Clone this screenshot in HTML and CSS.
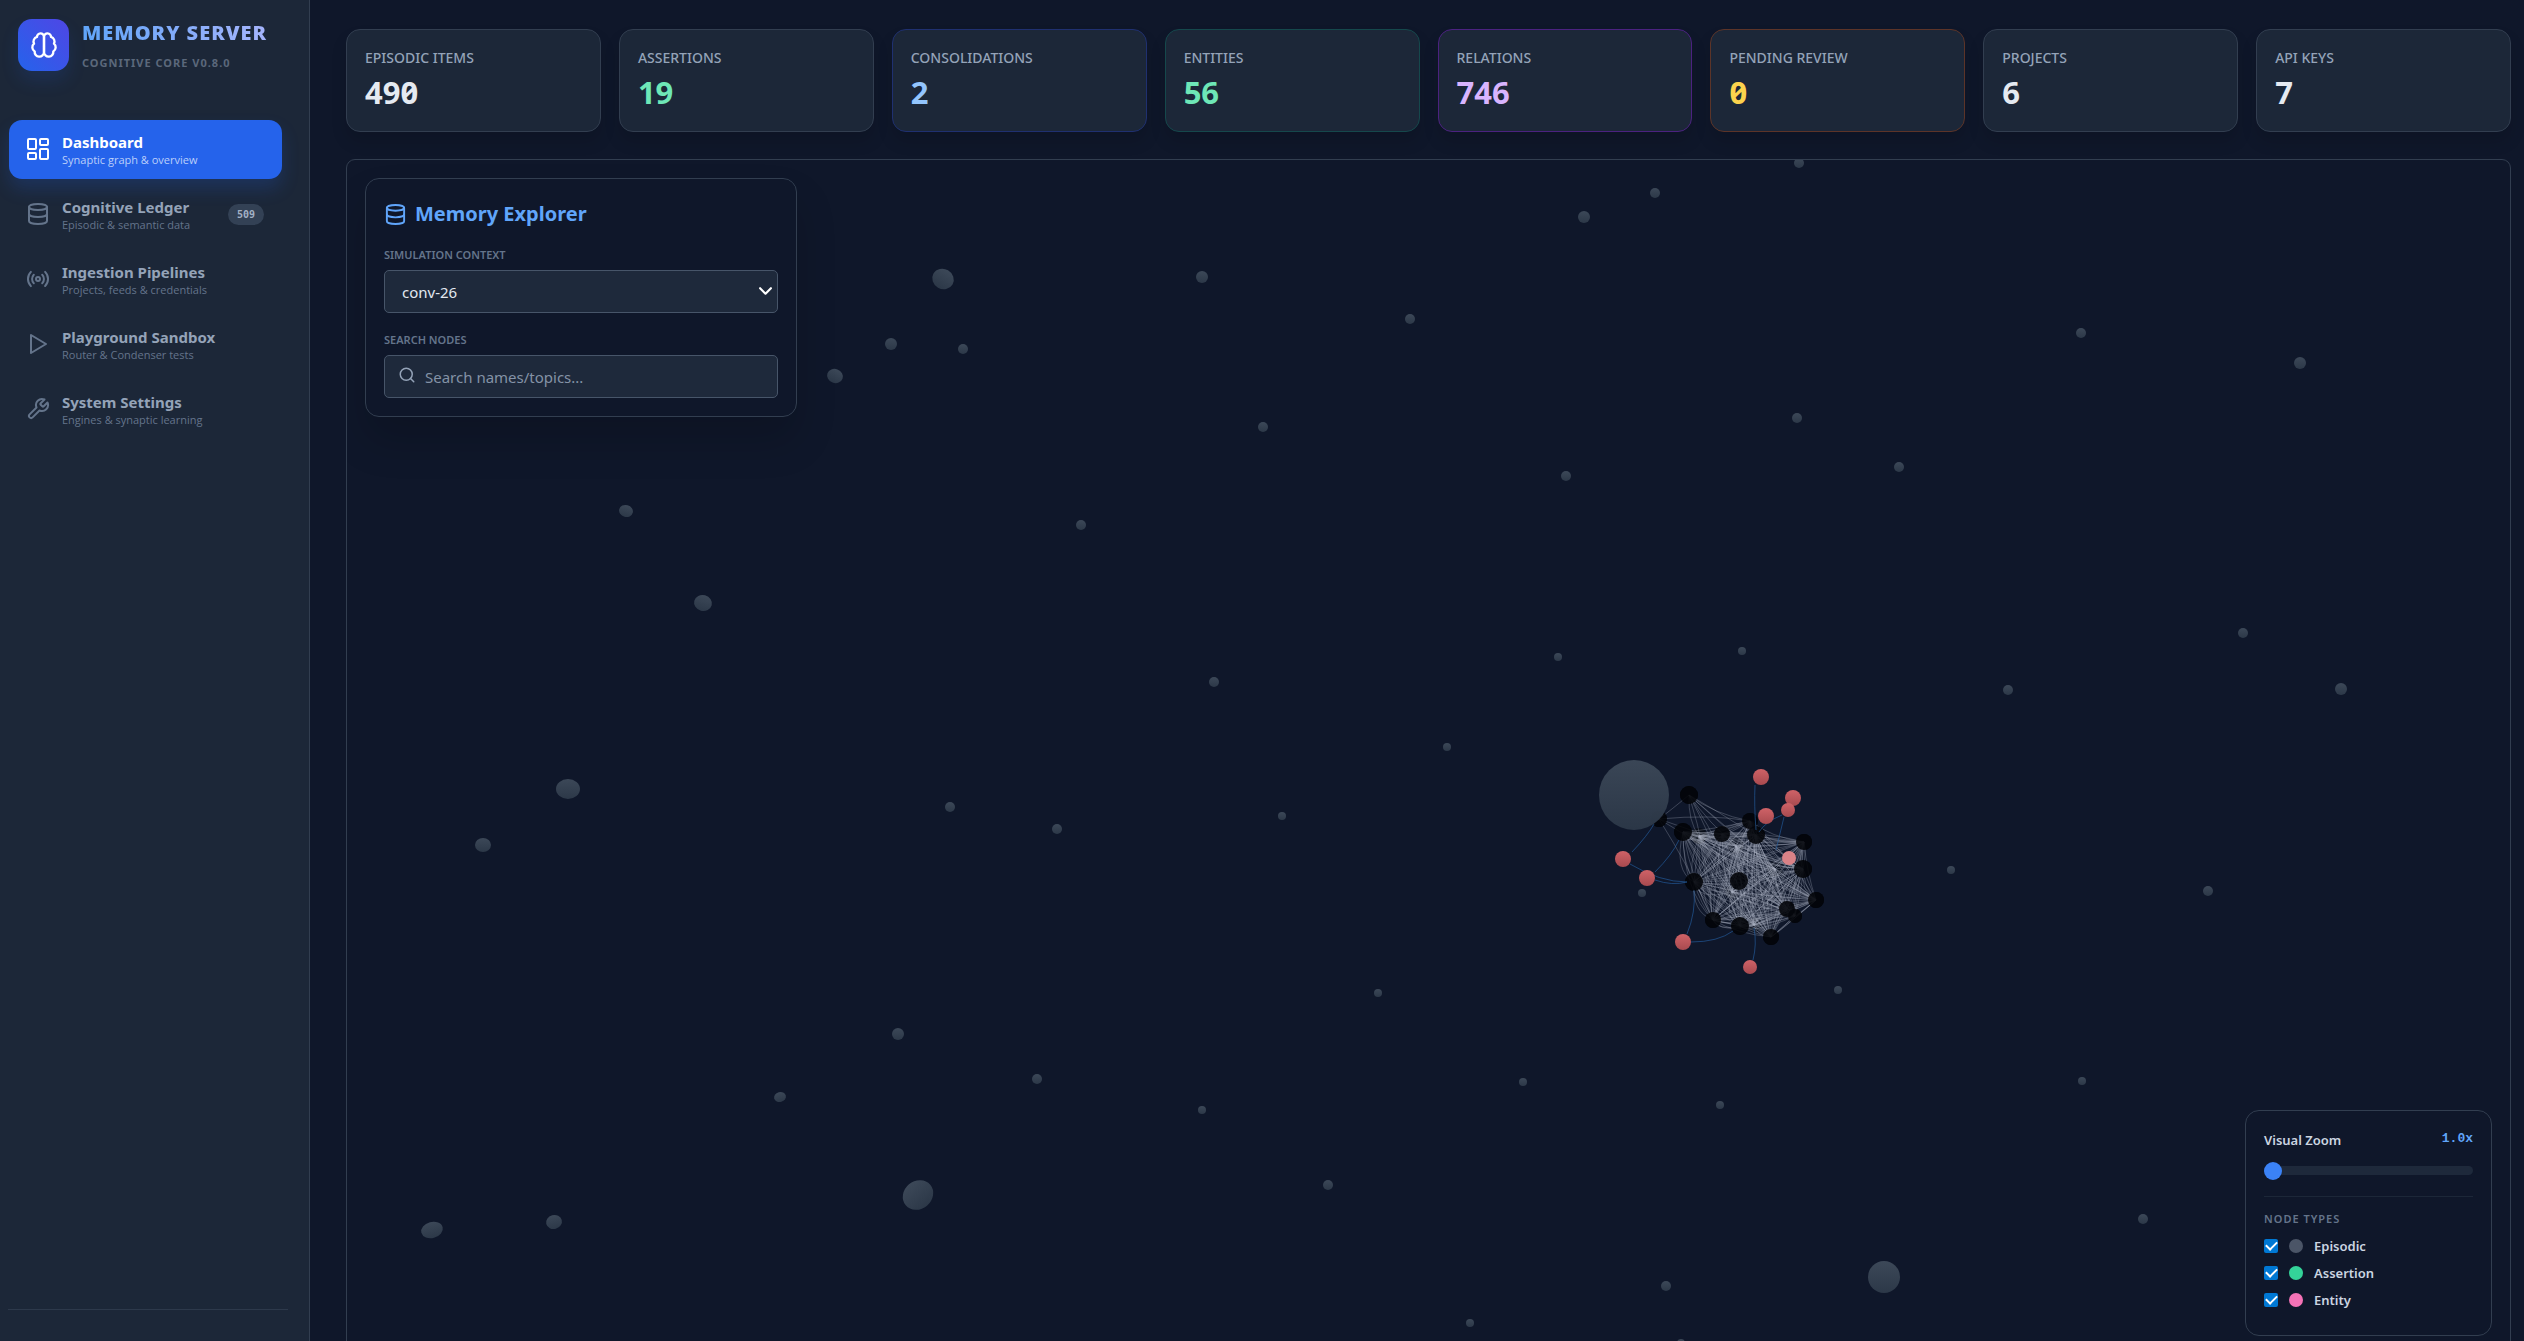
FILE: index.html
```
<!DOCTYPE html>
<html lang="en">
<head>
<meta charset="utf-8">
<title>Memory Server</title>
<link rel="stylesheet" href="styles.css">
</head>
<body>
<svg class="sprite" aria-hidden="true">
  <symbol id="i-brain" viewBox="0 0 24 24"><path d="M12 5a3 3 0 1 0-5.997.125 4 4 0 0 0-2.526 5.77 4 4 0 0 0 .556 6.588A4 4 0 1 0 12 18Z"/><path d="M12 5a3 3 0 1 1 5.997.125 4 4 0 0 1 2.526 5.77 4 4 0 0 1-.556 6.588A4 4 0 1 1 12 18Z"/></symbol>
  <symbol id="i-dash" viewBox="0 0 24 24"><rect x="2" y="2" width="8" height="10" rx="1"/><rect x="14" y="2" width="8" height="6" rx="1"/><rect x="14" y="12" width="8" height="10" rx="1"/><rect x="2" y="16" width="8" height="6" rx="1"/></symbol>
  <symbol id="i-db" viewBox="0 0 24 24"><ellipse cx="12" cy="5" rx="9" ry="3"/><path d="M3 5v14a9 3 0 0 0 18 0V5"/><path d="M3 12a9 3 0 0 0 18 0"/></symbol>
  <symbol id="i-radio" viewBox="0 0 24 24"><path d="M4.900 19.100C1 15.200 1 8.800 4.900 4.900M7.800 16.200c-2.300-2.300-2.300-6.100 0-8.500M16.200 7.800c2.300 2.300 2.300 6.100 0 8.500M19.100 4.900C23 8.800 23 15.100 19.100 19"/><circle cx="12" cy="12" r="2"/></symbol>
  <symbol id="i-play" viewBox="0 0 24 24"><path d="M5 3l15 9-15 9z"/></symbol>
  <symbol id="i-wrench" viewBox="0 0 24 24"><path d="M14.700 6.300a1 1 0 0 0 0 1.400l1.600 1.600a1 1 0 0 0 1.400 0l3.770-3.770a6 6 0 0 1-7.940 7.940l-6.910 6.910a2.120 2.120 0 0 1-3-3l6.910-6.910a6 6 0 0 1 7.940-7.940l-3.760 3.760z"/></symbol>
  <symbol id="i-search" viewBox="0 0 24 24"><circle cx="11" cy="11" r="8"/><path d="m21 21-4.300-4.300"/></symbol>
</svg>
<div class="app">
  <aside class="sidebar">
    <header class="brand">
      <span class="logo"><svg class="icon"><use href="#i-brain"/></svg></span>
      <div>
        <h1 class="brand-name">MEMORY SERVER</h1>
        <p class="brand-sub">COGNITIVE CORE V0.8.0</p>
      </div>
    </header>
    <nav class="nav">
      <button class="nav-item active"><svg class="icon"><use href="#i-dash"/></svg><span class="nav-text"><span class="nav-title">Dashboard</span><span class="nav-sub">Synaptic graph &amp; overview</span></span></button>
      <button class="nav-item"><svg class="icon"><use href="#i-db"/></svg><span class="nav-text"><span class="nav-title">Cognitive Ledger</span><span class="nav-sub">Episodic &amp; semantic data</span></span><span class="count">509</span></button>
      <button class="nav-item"><svg class="icon"><use href="#i-radio"/></svg><span class="nav-text"><span class="nav-title">Ingestion Pipelines</span><span class="nav-sub">Projects, feeds &amp; credentials</span></span></button>
      <button class="nav-item"><svg class="icon"><use href="#i-play"/></svg><span class="nav-text"><span class="nav-title">Playground Sandbox</span><span class="nav-sub">Router &amp; Condenser tests</span></span></button>
      <button class="nav-item"><svg class="icon"><use href="#i-wrench"/></svg><span class="nav-text"><span class="nav-title">System Settings</span><span class="nav-sub">Engines &amp; synaptic learning</span></span></button>
    </nav>
    <div class="sidebar-foot"></div>
  </aside>
  <main class="main">
    <section class="stats">
      <div class="stat"><span class="stat-label">EPISODIC ITEMS</span><span class="stat-value">490</span></div>
      <div class="stat"><span class="stat-label">ASSERTIONS</span><span class="stat-value green">19</span></div>
      <div class="stat edge-blue"><span class="stat-label">CONSOLIDATIONS</span><span class="stat-value blue">2</span></div>
      <div class="stat edge-green"><span class="stat-label">ENTITIES</span><span class="stat-value green">56</span></div>
      <div class="stat edge-purple"><span class="stat-label">RELATIONS</span><span class="stat-value purple">746</span></div>
      <div class="stat edge-orange"><span class="stat-label">PENDING REVIEW</span><span class="stat-value yellow">0</span></div>
      <div class="stat"><span class="stat-label">PROJECTS</span><span class="stat-value">6</span></div>
      <div class="stat"><span class="stat-label">API KEYS</span><span class="stat-value">7</span></div>
    </section>
    <section class="graph">
      <svg class="graph-canvas" id="graph" viewBox="347 160 2163 1194" preserveAspectRatio="xMidYMid slice">
        <defs>
          <linearGradient id="g-slate" x1="0" y1="0" x2="0" y2="1"><stop offset="0" stop-color="#3c4858"/><stop offset="1" stop-color="#2c3848"/></linearGradient>
          <linearGradient id="g-red" x1="0" y1="0" x2="0" y2="1"><stop offset="0" stop-color="#cf6267"/><stop offset="1" stop-color="#a84a4f"/></linearGradient>
        </defs>
      </svg>
      <div class="explorer">
        <h2 class="explorer-title"><svg class="icon"><use href="#i-db"/></svg>Memory Explorer</h2>
        <label class="field-label" for="context">SIMULATION CONTEXT</label>
        <div class="field">
          <select class="control" id="context"><option>conv-26</option></select>
          <svg class="chevron" viewBox="0 0 12 8"><path d="M1 1l5 5 5-5"/></svg>
        </div>
        <label class="field-label" for="search">SEARCH NODES</label>
        <div class="field">
          <svg class="search-icon"><use href="#i-search"/></svg>
          <input class="control search" id="search" type="text" placeholder="Search names/topics...">
        </div>
      </div>
      <div class="legend">
        <div class="zoom-head"><label for="zoom">Visual Zoom</label><output class="zoom-value" for="zoom">1.0x</output></div>
        <input class="zoom-range" id="zoom" type="range" min="1" max="5" step="0.1" value="1">
        <div class="legend-types">
          <h3 class="legend-title">NODE TYPES</h3>
          <label class="type"><input type="checkbox" checked><span class="dot dot-episodic"></span>Episodic</label>
          <label class="type"><input type="checkbox" checked><span class="dot dot-assertion"></span>Assertion</label>
          <label class="type"><input type="checkbox" checked><span class="dot dot-entity"></span>Entity</label>
        </div>
      </div>
    </section>
  </main>
</div>
<script src="script.js"></script>
</body>
</html>
```

FILE: script.js
```
const svg = document.getElementById('graph');
const add = (tag, attrs) => {
  const el = document.createElementNS('http://www.w3.org/2000/svg', tag);
  for (const k in attrs) el.setAttribute(k, attrs[k]);
  svg.appendChild(el);
};

// Episodic nodes: x, y, radius, optional vertical radius, optional tilt
const episodic = [
  [1799,163,5],[1655,193,5],[1584,217,6],[943,279,11,10,30],[1202,277,6],[891,344,6],[963,349,5],[835,376,8,7,20],
  [1410,319,5],[2081,333,5],[2300,363,6],[1263,427,5],[1797,418,5],[1566,476,5],[1899,467,5],[626,511,7,6,15],
  [1081,525,5],[703,603,9,8,15],[1558,657,4],[1742,651,4],[2243,633,5],[1214,682,5],[2008,690,5],[2341,689,6],
  [1447,747,4],[568,789,12,10],[483,845,8,7],[950,807,5],[1057,829,5],[1282,816,4],[1951,870,4],[2208,891,5],
  [1642,893,4],[1838,990,4],[1378,993,4],[898,1034,6],[1037,1079,5],[780,1097,6,5,-15],[1202,1110,4],[1523,1082,4],
  [1720,1105,4],[2082,1081,4],[918,1195,16,14,-40],[1328,1185,5],[2143,1219,5],[432,1230,11,8,-15],[554,1222,8,7,-15],
  [1884,1277,16],[1666,1286,5],[1470,1323,4],[1681,1343,4]
];

// Core nodes: x, y, radius, opacity
const core = [
  [1736,846,8,0.25],[1775,869,8,0.25],[1732,892,7,0.25],[1754,925,7,0.3],[1699,836,8,0.6],
  [1659,819,8,1],[1689,795,9,1],[1683,832,9,1],[1722,834,8,0.9],[1750,821,8,0.9],[1756,835,9,1],
  [1804,842,8,1],[1803,869,9,1],[1694,882,9,1],[1739,881,9,1],[1816,900,8,1],[1795,916,7,0.9],
  [1787,909,8,1],[1713,920,8,1],[1740,926,9,1],[1771,937,8,1]
];

const entities = [
  [1761,777,8],[1793,798,8],[1788,810,7],[1766,816,8],[1623,859,8],[1647,878,8],[1789,858,7],[1683,942,8],[1750,967,7]
];

const relations = [
  'M1755 785Q1754 805 1756 830','M1632 852Q1648 835 1654 824','M1655 872Q1672 855 1679 840',
  'M1655 880Q1672 886 1687 882','M1630 864Q1660 882 1687 882','M1687 934Q1696 912 1694 890',
  'M1691 942Q1718 942 1733 931','M1753 960Q1757 944 1754 928','M1782 815Q1765 822 1759 832','M1784 817L1776 850'
];

episodic.forEach(([x, y, r, v, t]) => add('ellipse', {
  cx: x, cy: y, rx: r, ry: v || r, fill: 'url(#g-slate)', transform: `rotate(${t || 0} ${x} ${y})`
}));

core.forEach(([x, y, r, o]) => add('circle', { cx: x, cy: y, r, fill: '#03060b', opacity: o }));

core.forEach((a, i) => {
  core.forEach((b, j) => {
    if (j <= i || a === core[14] || b === core[14]) return;
    const outer = [a, b].some(n => n[1] < 822 && n[0] < 1700);
    if (outer && (i * 3 + j) % 3) return;
    const bend = ((i + j) % 5 - 2) * 3;
    const mx = (a[0] + b[0]) / 2 + bend;
    const my = (a[1] + b[1]) / 2 - bend;
    add('path', { d: `M${a[0]} ${a[1]}Q${mx} ${my} ${b[0]} ${b[1]}`, class: 'mesh' });
    if (!outer) add('path', { d: `M${a[0]} ${a[1]}Q${mx - 9} ${my + 8} ${b[0]} ${b[1]}`, class: 'mesh' });
  });
});

core.filter(n => n[3] > 0.8).forEach(([x, y, r]) => add('circle', { cx: x, cy: y, r, fill: '#03060b', opacity: 0.9 }));
relations.forEach(d => add('path', { d, class: 'relation' }));
entities.forEach(([x, y, r]) => add('circle', { cx: x, cy: y, r, fill: x === 1789 ? '#d98287' : 'url(#g-red)' }));
add('circle', { cx: 1634, cy: 795, r: 35, fill: 'url(#g-slate)', opacity: 0.96 });
```

FILE: styles.css
```
* { box-sizing: border-box; }
body {
  margin: 0;
  height: 100vh;
  overflow: hidden;
  background: #0f172a;
  color: #e5eaf1;
  font-family: "Noto Sans", "Open Sans", sans-serif;
  font-size: 16px;
}
h1, h2, h3, p { margin: 0; }
button, input, select { font: inherit; }
.sprite { display: none; }
.icon, .search-icon, .chevron {
  fill: none;
  stroke: currentColor;
  stroke-width: 2;
  stroke-linecap: round;
  stroke-linejoin: round;
  flex: none;
}
.icon { width: 24px; height: 24px; }
.app { display: flex; height: 100%; }

.sidebar {
  flex: none;
  width: 310px;
  padding: 19px 21px 0 9px;
  display: flex;
  flex-direction: column;
  background: #1c2738;
  border-right: 1px solid #323e50;
}
.brand { display: flex; gap: 13px; padding-left: 9px; }
.logo {
  width: 51px;
  height: 52px;
  border-radius: 14px;
  display: grid;
  place-items: center;
  color: #fff;
  background: linear-gradient(to top right, #2563eb, #4f46e5);
  box-shadow: 0 10px 18px rgba(37, 99, 235, 0.14);
}
.logo .icon { width: 28px; height: 28px; }
.brand-name {
  font-size: 20px;
  line-height: 28px;
  font-weight: 900;
  letter-spacing: 1px;
  background: linear-gradient(to right, #60a5fa, #a5b4fc);
  -webkit-background-clip: text;
  background-clip: text;
  color: transparent;
}
.brand-sub {
  margin-top: 7px;
  font-size: 11px;
  line-height: 18px;
  font-weight: 700;
  letter-spacing: 1px;
  color: #5b687b;
}
.nav { margin-top: 48px; display: flex; flex-direction: column; gap: 6px; }
.nav-item {
  height: 59px;
  margin-right: 6px;
  padding: 0 18px 1px 17px;
  display: flex;
  align-items: center;
  gap: 12px;
  border: 0;
  border-radius: 13px;
  background: none;
  color: #64748b;
  text-align: left;
}
.nav-text { display: flex; flex-direction: column; flex: 1; white-space: nowrap; }
.nav-title { font-size: 15px; line-height: 20px; font-weight: 700; color: #94a3b8; }
.nav-sub { font-family: "Open Sans", "Noto Sans", sans-serif; font-size: 11px; line-height: 15px; color: #64748b; }
.nav-item.active {
  background: #2563eb;
  color: #fff;
  box-shadow: 0 10px 18px rgba(37, 99, 235, 0.2);
}
.active .nav-title { color: #fff; }
.active .nav-sub { color: #bccffa; }
.count {
  padding: 0 9px;
  border-radius: 11px;
  background: #334155;
  color: #a3b1c6;
  font: 700 10px/21px "DejaVu Sans Mono", monospace;
}
.sidebar-foot { margin: auto 0 31px -1px; border-top: 1px solid #2d394b; }

.main {
  flex: 1;
  min-width: 0;
  height: calc(100vh + 14px);
  padding: 29px 13px 0 36px;
  display: flex;
  flex-direction: column;
  gap: 27px;
}
.stats { display: grid; grid-template-columns: repeat(8, 1fr); gap: 18px; }
.stat {
  height: 103px;
  padding: 16px 18px;
  display: flex;
  flex-direction: column;
  gap: 2px;
  background: #1c2738;
  border: 1px solid #323e50;
  border-radius: 14px;
  box-shadow: 0 10px 16px rgba(0, 0, 0, 0.12);
}
.stat-label { font-size: 14px; line-height: 24px; font-weight: 500; color: #94a3b8; }
.stat-value { font-size: 31px; line-height: 40px; font-weight: 700; font-variant-numeric: slashed-zero; }
.green { color: #6ee7b7; }
.blue { color: #93c5fd; }
.purple { color: #d8b4fe; }
.yellow { color: #fcd34d; }
.edge-blue { border-color: #1f3070; }
.edge-green { border-color: #15484c; }
.edge-purple { border-color: #4b2280; }
.edge-orange { border-color: #5c3428; }

.graph {
  position: relative;
  flex: 1;
  min-height: 0;
  border: 1px solid #323e50;
  border-radius: 9px;
  overflow: hidden;
}
.graph-canvas { position: absolute; inset: 0; width: 100%; height: 100%; }
.mesh { fill: none; stroke: #a9b0c0; stroke-width: 1; opacity: 0.3; }
.relation { fill: none; stroke: #2563a8; stroke-width: 1; opacity: 0.6; }

.explorer {
  position: absolute;
  left: 18px;
  top: 18px;
  width: 432px;
  padding: 18px;
  background: #0f172a;
  border: 1px solid #323e50;
  border-radius: 14px;
  box-shadow: 0 24px 40px rgba(0, 0, 0, 0.16);
}
.explorer-title {
  display: flex;
  align-items: center;
  gap: 8px;
  font-size: 20px;
  line-height: 34px;
  font-weight: 700;
  color: #60a5fa;
}
.explorer-title .icon { width: 23px; height: 23px; }
.field-label {
  display: block;
  margin-top: 16px;
  font-size: 11px;
  line-height: 16px;
  font-weight: 600;
  color: #64748b;
}
.field { position: relative; margin-top: 7px; }
.field + .field-label { margin-top: 19px; }
.control {
  display: block;
  appearance: none;
  width: 100%;
  height: 43px;
  padding: 0 17px;
  border: 1px solid #475569;
  border-radius: 5px;
  background: #1e293b;
  color: #e2e8f0;
  font-size: 15px;
}
.control.search { padding-left: 40px; }
.control::placeholder { color: #8492a6; }
.chevron { position: absolute; right: 6px; top: 17px; width: 13px; height: 9px; color: #fff; }
.search-icon { position: absolute; left: 14px; top: 11px; width: 18px; height: 18px; color: #94a3b8; }

.legend {
  position: absolute;
  right: 18px;
  bottom: 18px;
  width: 247px;
  height: 226px;
  padding: 17px 18px;
  background: #0f172a;
  border: 1px solid #323e50;
  border-radius: 14px;
  font-size: 13px;
  line-height: 22px;
  font-weight: 600;
  color: #cbd5e1;
}
.zoom-head { display: flex; justify-content: space-between; line-height: 24px; }
.zoom-value { color: #60a5fa; font: 700 13px/22px "Liberation Mono", monospace; }
.zoom-range {
  display: block;
  appearance: none;
  width: 100%;
  height: 18px;
  margin: 9px 0 17px;
  background: none;
}
.zoom-range::-webkit-slider-runnable-track { height: 9px; border-radius: 5px; background: #1e293b; }
.zoom-range::-webkit-slider-thumb {
  appearance: none;
  width: 18px;
  height: 18px;
  margin-top: -4px;
  border-radius: 50%;
  background: #3b82f6;
}
.legend-types { border-top: 1px solid #1c2738; padding-top: 12px; }
.legend-title { font-size: 11px; line-height: 20px; font-weight: 600; letter-spacing: 1px; color: #64748b; }
.type { display: flex; align-items: center; height: 27px; }
.legend-title + .type { margin-top: 3px; }
.type input {
  appearance: none;
  display: grid;
  place-items: center;
  width: 14px;
  height: 14px;
  margin: 0 11px 0 0;
  border-radius: 2px;
  background: #0078d4;
}
.type input:checked::after {
  content: "";
  width: 9px;
  height: 5px;
  margin-bottom: 3px;
  border: solid #fff;
  border-width: 0 0 2px 2px;
  transform: rotate(-45deg);
}
.dot { width: 14px; height: 14px; margin-right: 11px; border-radius: 50%; }
.dot-episodic { background: #4b5567; }
.dot-assertion { background: #34d399; }
.dot-entity { background: #f472b6; }
```
